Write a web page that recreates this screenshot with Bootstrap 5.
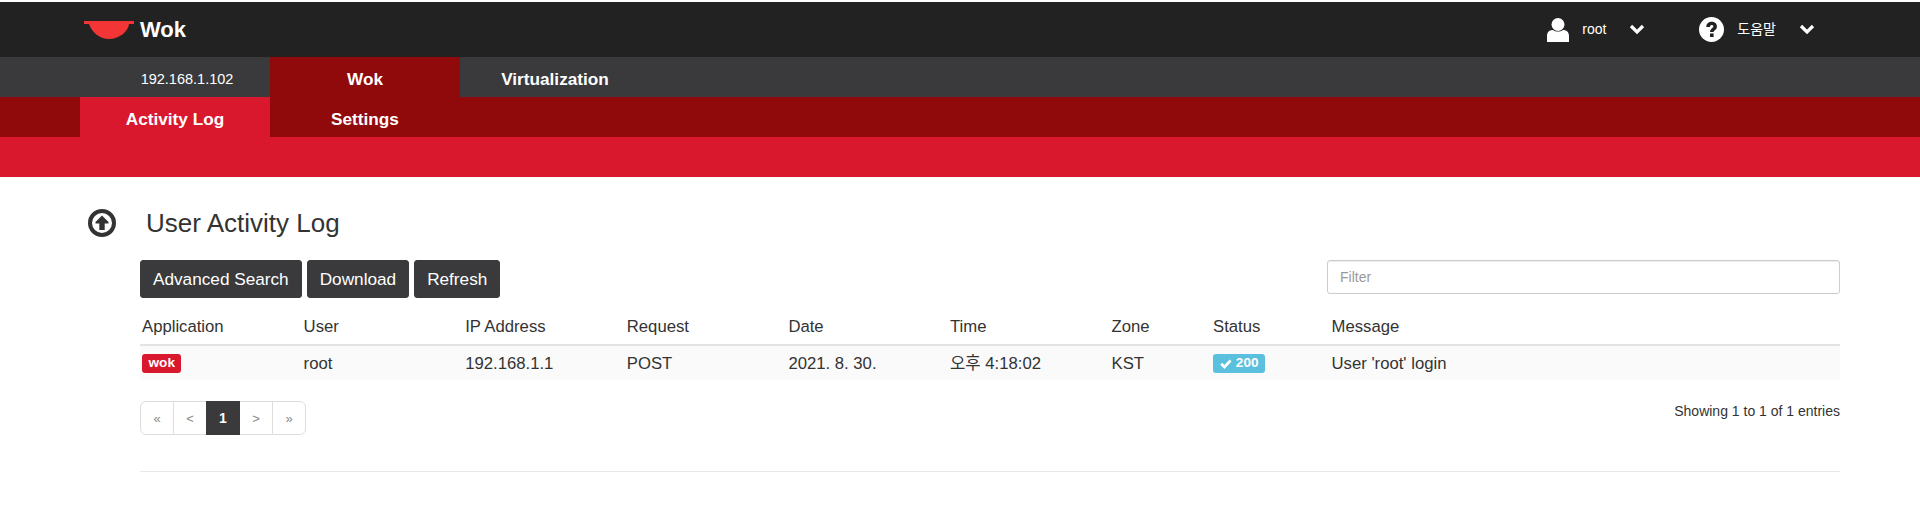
<!doctype html>
<html lang="en">
<head>
<meta charset="utf-8">
<title>User Activity Log</title>
<link href="https://cdn.jsdelivr.net/npm/bootstrap@5.3.0/dist/css/bootstrap.min.css" rel="stylesheet">
<style>
html,body{height:100%;overflow:hidden}
body{font-family:"Liberation Sans","Noto Sans CJK KR",Arial,sans-serif;font-size:16px;color:#333;background:#fff}
.wk-top{height:55px;margin-top:2px;background:#222;color:#fff;padding-left:84px;padding-right:105px}
.wk-brand{font-size:22px;font-weight:700;color:#fff;text-decoration:none;gap:6px}
.wk-menu{font-size:14px;color:#fff}
.wk-label-text{margin-left:13px}
.wk-chev{margin-left:23px}
.wk-help{margin-left:54px}
.wk-nav{height:40px;background:#3a3a3c}
.wk-sub{height:40px;background:#900a0b}
.wk-band{height:40px;background:#d9182d}
.wk-tab{width:190px;height:40px;color:#fff;font-weight:700;font-size:17.2px;text-decoration:none;padding-top:5px}
.wk-host{width:190px;margin-left:80px;font-size:14.5px;color:#fff;padding:5px 0 0 24px}
.wk-on-dark{background:#900a0b}
.wk-on-red{background:#d9182d}
.wk-sub .wk-first{margin-left:80px}
.wk-main{padding:32px 80px 0 88px}
.wk-title{font-size:26px;font-weight:400;margin:0;line-height:28px;color:#333;margin-left:30px}
.wk-head{height:28px;margin-bottom:23px}
.wk-body{margin-left:52px}
.wk-btns{gap:5px}
.wk-btn{background:#3a3a3c;color:#fff;border:1px solid #3a3a3c;border-radius:3px;font-size:17.2px;line-height:20px;padding:8px 12px;height:38px}
.wk-btn:hover{background:#3a3a3c;color:#fff}
.wk-filter{width:513px;height:34px;border:1px solid #ccc;border-radius:3px;font-size:14px;padding:4px 12px;margin-top:0;box-shadow:inset 0 1px 1px rgba(0,0,0,.075)}
.wk-filter::placeholder{color:#999}
.wk-table{margin:10px 0 0;width:100%;table-layout:fixed;border-collapse:collapse;color:#333}
.wk-table th,.wk-table td{font-size:16.7px;font-weight:400;padding:8px 2px;line-height:19px;vertical-align:middle;border:0;background:transparent;box-shadow:none;color:#333}
.wk-table th{height:37px;border-bottom:2px solid #e3e3e3}
.wk-table td{height:35px;background:#fafafa;padding-top:7px;padding-bottom:7px}
.wk-pill{display:inline-block;font-size:13.6px;font-weight:700;line-height:14px;border-radius:3px;color:#fff;vertical-align:middle}
.wk-red{background:#d9182d;padding:2px 6.500px 3px}
.wk-info{background:#5bc0de;padding:2px 6px 3px 7px}
.wk-foot{margin-top:21px}
.wk-pager .page-link{width:34px;height:34px;padding:0;display:flex;align-items:center;justify-content:center;font-size:13px;color:#888;border-color:#ddd;line-height:1}
.wk-pager .page-item.active .page-link{background:#3a3a3c;border-color:#3a3a3c;color:#fff;font-weight:700;font-size:14px}
.wk-count{font-size:14px;color:#333;margin-top:0}
.wk-rule{margin:36px 0 0;border:0;border-top:1px solid #e8e8e8;opacity:1}
</style>
</head>
<body>
<header class="wk-top d-flex align-items-center justify-content-between">
  <a class="wk-brand d-flex align-items-center" href="#">
    <svg width="50" height="19" viewBox="0 0 50 19" aria-hidden="true"><path d="M0 1h50v3h-5c-1 8-10 15-20 15S8 12 5 4H0z" fill="#f33535"/></svg>
    <span>Wok</span>
  </a>
  <div class="d-flex align-items-center">
    <div class="wk-menu d-flex align-items-center">
      <svg width="22" height="24" viewBox="0 0 22 24" aria-hidden="true"><circle cx="11" cy="6.500" r="6.500" fill="#fff"/><path d="M0 24v-6c0-4 2.500-6 6-6 1.500 1 3 1.500 5 1.500s3.500-.5 5-1.500c3.500 0 6 2 6 6v6z" fill="#fff"/></svg>
      <span class="wk-label-text">root</span>
      <svg class="wk-chev" width="16" height="11" viewBox="0 0 16 11" aria-hidden="true"><path d="M2 2l6 6 6-6" fill="none" stroke="#fff" stroke-width="3.200"/></svg>
    </div>
    <div class="wk-menu wk-help d-flex align-items-center">
      <svg width="25" height="25" viewBox="0 0 24 24" aria-hidden="true"><circle cx="12" cy="12" r="12" fill="#fff"/><path d="M7 9.500C7 6 9.500 4.500 12.200 4.500 15 4.500 17.200 6 17.200 9c0 3.500-3.200 3.500-3.200 5.500h-3.400c0-3.800 3.200-3.800 3.200-5.500 0-.9-.7-1.400-1.600-1.400-1 0-1.700.7-1.700 1.900z" fill="#222"/><rect x="10.600" y="15.800" width="3.400" height="3.400" fill="#222"/></svg>
      <span class="wk-label-text">도움말</span>
      <svg class="wk-chev" width="16" height="11" viewBox="0 0 16 11" aria-hidden="true"><path d="M2 2l6 6 6-6" fill="none" stroke="#fff" stroke-width="3.200"/></svg>
    </div>
  </div>
</header>
<nav class="wk-nav d-flex">
  <span class="wk-host d-flex align-items-center justify-content-center">192.168.1.102</span>
  <a class="wk-tab wk-on-dark d-flex align-items-center justify-content-center" href="#">Wok</a>
  <a class="wk-tab d-flex align-items-center justify-content-center" href="#">Virtualization</a>
</nav>
<nav class="wk-sub d-flex">
  <a class="wk-tab wk-first wk-on-red d-flex align-items-center justify-content-center" href="#">Activity Log</a>
  <a class="wk-tab d-flex align-items-center justify-content-center" href="#">Settings</a>
</nav>
<div class="wk-band"></div>
<main class="wk-main">
  <div class="wk-head d-flex align-items-center">
    <svg width="28" height="28" viewBox="0 0 28 28" aria-hidden="true"><circle cx="14" cy="14" r="12" fill="none" stroke="#333" stroke-width="4"/><path d="M14 6.500l6.500 6.500v1.500h-3.800V21h-5.400v-6.500H7.500V13z" fill="#333"/></svg>
    <h1 class="wk-title">User Activity Log</h1>
  </div>
  <div class="wk-body">
    <div class="d-flex justify-content-between align-items-start">
      <div class="d-flex wk-btns">
        <button class="btn wk-btn" type="button">Advanced Search</button>
        <button class="btn wk-btn" type="button">Download</button>
        <button class="btn wk-btn" type="button">Refresh</button>
      </div>
      <input class="form-control wk-filter" type="text" placeholder="Filter" aria-label="Filter">
    </div>
    <table class="table wk-table">
      <colgroup><col style="width:161.600px"><col style="width:161.600px"><col style="width:161.600px"><col style="width:161.600px"><col style="width:161.600px"><col style="width:161.600px"><col style="width:101.500px"><col style="width:118.500px"><col></colgroup>
      <thead><tr><th>Application</th><th>User</th><th>IP Address</th><th>Request</th><th>Date</th><th>Time</th><th>Zone</th><th>Status</th><th>Message</th></tr></thead>
      <tbody><tr>
        <td><span class="wk-pill wk-red">wok</span></td><td>root</td><td>192.168.1.1</td><td>POST</td><td>2021. 8. 30.</td><td>오후 4:18:02</td><td>KST</td>
        <td><span class="wk-pill wk-info"><svg width="12" height="10" viewBox="0 0 12 10" aria-hidden="true"><path d="M1.200 4.800l3.200 3.200 6.200-6.500" fill="none" stroke="#fff" stroke-width="2.800"/></svg> 200</span></td>
        <td>User 'root' login</td>
      </tr></tbody>
    </table>
    <div class="wk-foot d-flex justify-content-between align-items-start">
      <ul class="pagination wk-pager m-0">
        <li class="page-item"><a class="page-link" href="#">«</a></li>
        <li class="page-item"><a class="page-link" href="#">&lt;</a></li>
        <li class="page-item active"><a class="page-link" href="#">1</a></li>
        <li class="page-item"><a class="page-link" href="#">&gt;</a></li>
        <li class="page-item"><a class="page-link" href="#">»</a></li>
      </ul>
      <div class="wk-count">Showing 1 to 1 of 1 entries</div>
    </div>
    <hr class="wk-rule">
  </div>
</main>
</body>
</html>
